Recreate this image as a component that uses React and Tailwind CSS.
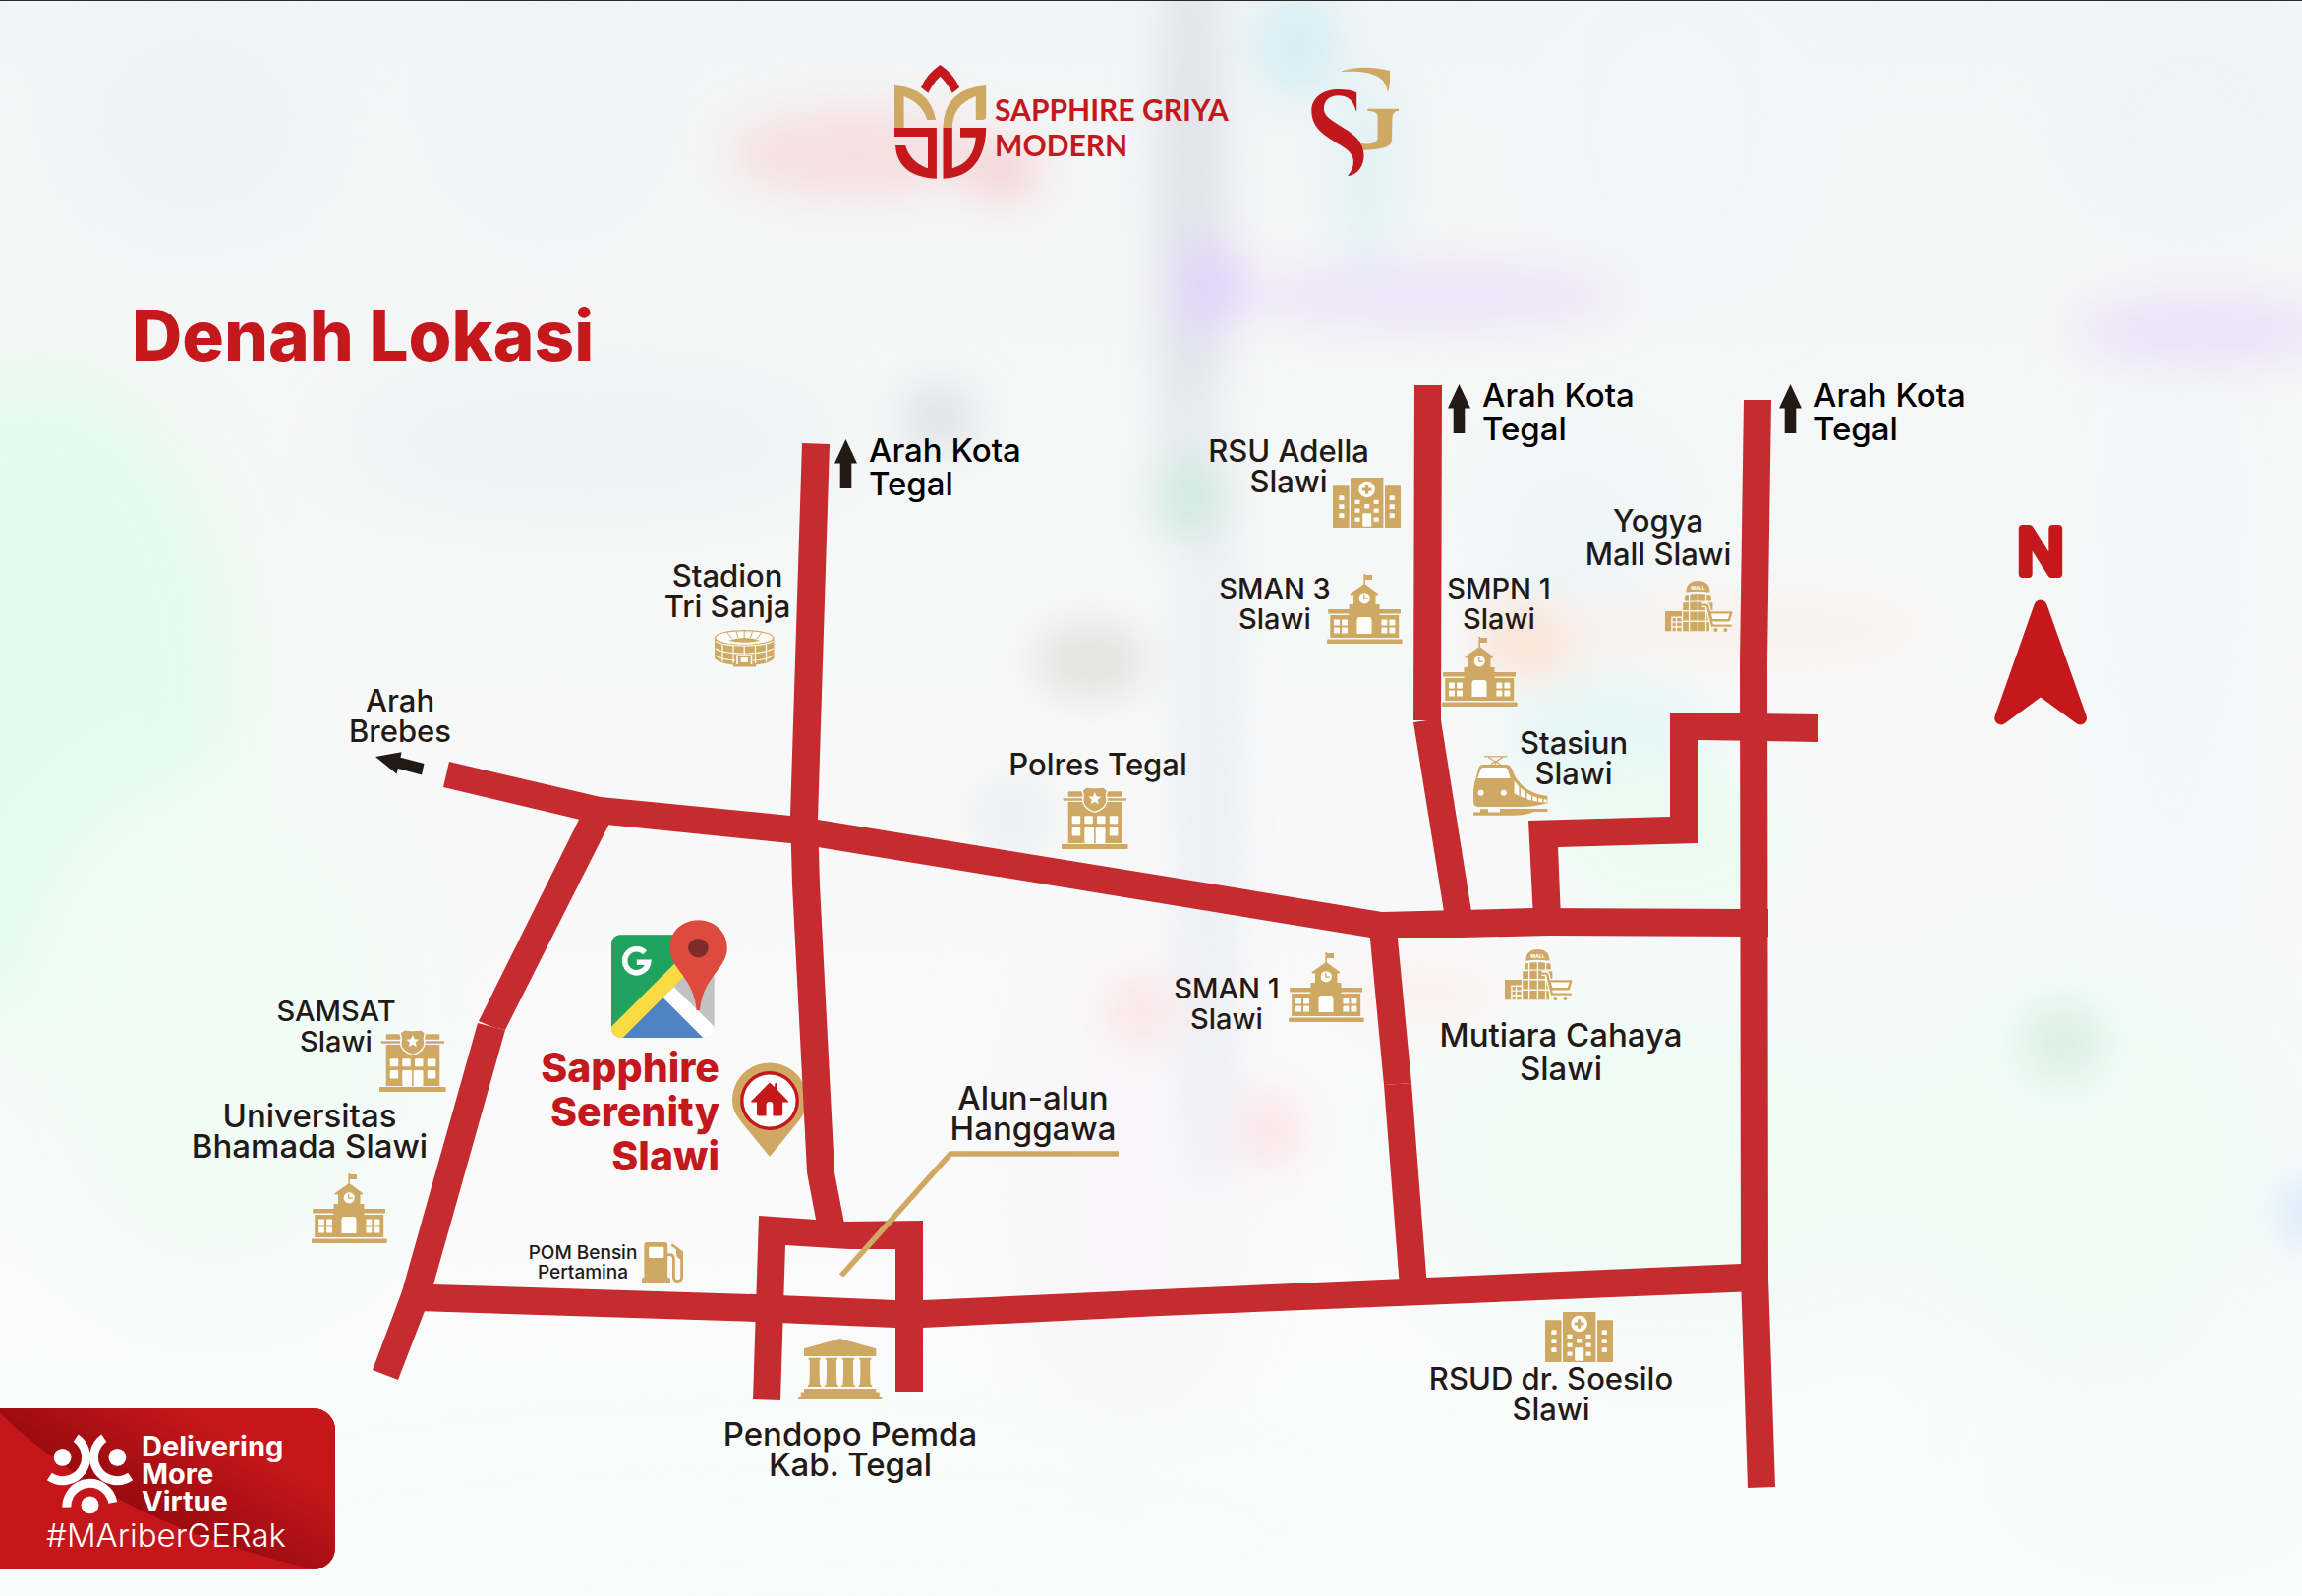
import React from "react";

const MAP = { x: 0, y: 380, w: 2342, h: 1244 };
const at = (x, y) => ({
  left: `${((x - MAP.x) / MAP.w) * 100}%`,
  top: `${((y - MAP.y) / MAP.h) * 100}%`,
});

/* ---------- logos ---------- */

function LotusLogo() {
  return (
    <svg className="h-[118px] w-[94px] shrink-0" viewBox="0 0 94 118" aria-hidden="true">
      <g fill="#c4181c">
        <path d="M46.6 1Q60 10 66.2 24L58.8 29.7Q54 20 46.6 12.7Q39 20 34.4 29.7L27 24Q33 10 46.6 1Z" />
        <path d="M0 65H42.9V116.7C20 116 2 106 1.1 83H11.1Q16 100 34 106.3V74H0Z" />
        <path d="M49.5 65H58.8V106.3Q81 100 82.8 74.7H67V65H93.2C93 96 78 116 49.5 116.7Z" />
      </g>
      <g fill="#cfa964">
        <path d="M0 22Q36 24 42.1 57H33.3Q28 40 9.6 33V65H0Z" />
        <path d="M49.5 65Q50 25 93.2 22V53Q93.2 57 89 57H82.8V33Q59 42 58.8 65Z" />
      </g>
    </svg>
  );
}

function MonogramLogo() {
  return (
    <svg className="h-[118px] w-[94px] shrink-0" viewBox="0 0 94 118" aria-label="SG">
      <g fill="#cfa964">
        <path d="M35 7.3C52 2 70 3 83.9 7C84.5 15 84 22 82.4 27.7H81.5C80 13 65 6 35 8Z" />
        <path d="M61.3 45.7H93.1V47.7Q87 48 86.5 54L86 78Q85.5 83 79 85Q67 88.5 55 87.7V81Q70 83 71.6 76V53Q71 48 61.3 47.7Z" />
      </g>
      <path
        fill="#c1171c"
        d="M50.2 29.3V47.7H49.5C47 37 41 32.3 32 32.3C22 32.3 16.9 38 16.9 46C17 62 57.6 66 57.6 93C57.6 104 51 113 42 114L41.3 113.5C46 108 47 104 46.9 98C46 80 4.3 78 4.3 48C4.3 34 16 26 32 26C40 26 46 27 50.2 29.3Z"
      />
    </svg>
  );
}

/* ---------- place icons ---------- */

const GOLD = "#cfa964";
const PALE = "#fdfdfa";

function Boxes({ list, rx = 0.6 }) {
  return list.map(([x, y, w, h], i) => <rect key={i} x={x} y={y} width={w} height={h} rx={rx} />);
}

function SchoolIcon() {
  return (
    <svg className="h-[71px] w-[77px]" viewBox="0 0 77 71" aria-hidden="true">
      <g fill={GOLD}>
        <path d="M37.4 0H39V1H46V6H39V10.5L52 20V21.5H49.5V31H53.5V36H75V40.5H53.5V42H73.2V65H3.2V42H22.5V40.5H1.2V36H22.5V31H27V21.5H23.7V20L37.4 10.5Z" />
        <rect x="0" y="66.5" width="76.7" height="4.5" rx="1" />
      </g>
      <g fill={PALE}>
        <circle cx="38.2" cy="24.8" r="5.6" />
        <path d="M30.5 61V47Q30.5 44 33.5 44H42.5Q45.5 44 45.5 47V61Z" />
        <Boxes
          list={[
            [7, 46.5, 6, 6], [15, 46.5, 6, 6], [7, 54.5, 6, 6], [15, 54.5, 6, 6],
            [55.4, 46.5, 6, 6], [63.4, 46.5, 6, 6], [55.4, 54.5, 6, 6], [63.4, 54.5, 6, 6],
          ]}
        />
      </g>
      <path d="M37.8 21V25.2H42" fill="none" stroke={GOLD} strokeWidth="1.3" />
    </svg>
  );
}

function HospitalIcon() {
  return (
    <svg className="h-[51px] w-[69px]" viewBox="0 0 69 51" aria-hidden="true">
      <g fill={GOLD}>
        <Boxes list={[[0, 8.3, 16.6, 42.7], [18, 0, 33.4, 51], [53, 8.3, 16, 42.7]]} />
      </g>
      <g fill={PALE}>
        <circle cx="34.6" cy="12" r="8.3" />
        <Boxes
          list={[
            [6.3, 18.3, 5.2, 4.8], [6.3, 27.3, 5.2, 4.8], [6.3, 36.3, 5.2, 4.8],
            [57.7, 18.3, 5.2, 4.8], [57.7, 27.3, 5.2, 4.8], [57.7, 36.3, 5.2, 4.8],
            [22.5, 22.7, 5, 4.2], [22.5, 31.6, 5, 4.2], [22.5, 40.6, 5, 4.2],
            [41.6, 22.7, 5, 4.2], [41.6, 31.6, 5, 4.2], [41.6, 40.6, 5, 4.2],
            [32.2, 27, 5, 4.4], [30.2, 36.3, 9, 13.4],
          ]}
        />
      </g>
      <path d="M34.6 7.2V16.8M29.8 12H39.4" stroke={GOLD} strokeWidth="3.2" />
    </svg>
  );
}

function PoliceIcon() {
  return (
    <svg className="h-[64px] w-[68px]" viewBox="0 0 68 64" aria-hidden="true">
      <g fill={GOLD}>
        <Boxes list={[[6.7, 5.3, 54.6, 5.4], [1.6, 12.3, 64.6, 2.4], [6.7, 16, 54.6, 42], [0, 59, 67.6, 5]]} />
      </g>
      <path
        d="M25 0.8Q33.7 2.4 42.5 0.8L46.6 4.5Q44.6 9 46 14Q46 22.5 33.8 26.4Q21.6 22.5 21.6 14Q23 9 21 4.5Z"
        fill={GOLD}
        stroke={PALE}
        strokeWidth="1.4"
      />
      <path d="M33.8 6L35.6 10.3L40.2 10.7L36.7 13.7L37.8 18.2L33.8 15.8L29.8 18.2L30.9 13.7L27.4 10.7L32 10.3Z" fill={PALE} />
      <g fill={PALE}>
        <Boxes
          list={[
            [10.7, 30.3, 8.5, 8], [23.3, 30.3, 8.5, 8], [36, 30.3, 8.5, 8], [48.8, 30.3, 8.5, 8],
            [10.7, 42, 8.5, 8.6], [48.8, 42, 8.5, 8.6], [23.3, 42, 9.8, 16], [34.7, 42, 9.8, 16],
          ]}
          rx={1}
        />
      </g>
    </svg>
  );
}

function MallIcon() {
  return (
    <svg className="h-[52px] w-[69px]" viewBox="0 0 69 52" aria-hidden="true">
      <g fill={GOLD}>
        <path d="M21.4 11.8Q21.6 0 33.4 0Q45.3 0 45.5 11.8Q33.4 9.8 21.4 11.8Z" />
        <path d="M20.4 14.6Q33.4 11.4 46.4 14.6L47 20.6H19.8Z" />
        <path d="M18.2 22.6Q33.4 20.4 48.4 22.6V30H18.2Z" />
        <path d="M18.2 31.6H46V40.4H18.2ZM18.2 42H45V51.3H18.2Z" />
        <path d="M0 31H17V36.6H6.2V51.3H0Z" />
        <Boxes list={[[7.6, 38, 3.2, 3.4], [12.2, 38, 4.4, 3.4], [7.6, 42.8, 3.2, 3.4], [12.2, 42.8, 4.4, 3.4], [7.6, 47.8, 3.2, 3.5], [12.2, 47.8, 4.4, 3.5]]} rx={0} />
      </g>
      <path d="M24.6 12.5V51.5M33.4 12V51.5M41.6 12.5V51.5" stroke={PALE} strokeWidth="1.3" />
      <path d="M37.4 24.6H42Q43 24.6 43.3 26L47.6 44.8H67" fill="none" stroke={PALE} strokeWidth="5" />
      <g fill="none" stroke={GOLD}>
        <path d="M37.4 24.6H42Q43 24.6 43.3 26L47.8 45.6H66.8" strokeWidth="2.4" strokeLinecap="round" />
        <path d="M45.4 32.4H67.2L64.8 40.2H47.4Z" strokeWidth="2.4" fill={PALE} strokeLinejoin="round" />
      </g>
      <circle cx="51.4" cy="50" r="2" fill={GOLD} />
      <circle cx="61.4" cy="50" r="2" fill={GOLD} />
      <text x="33.4" y="8.6" textAnchor="middle" fontFamily="Inter, sans-serif" fontWeight="800" fontSize="5" fill={PALE}>
        MALL
      </text>
    </svg>
  );
}

function TrainIcon() {
  return (
    <svg className="h-[61px] w-[76px]" viewBox="0 0 76 61" aria-hidden="true">
      <g fill="none" stroke={GOLD} strokeWidth="1.3">
        <path d="M11 0.8H34.4M15 1L22.5 6.5L30.5 1M22.5 6.5V9M17.5 9L22.5 5.5L27.5 9" />
      </g>
      <path
        fill={GOLD}
        d="M9 9H34Q37 9 38.2 11.5L42.5 21Q52 38 75.5 41V48.3Q62 52 50 52H6Q0 52 0 46V36Q0 30 5.6 12Q6.6 9 9 9Z"
      />
      <g fill={PALE}>
        <path d="M10 12H32Q34 12 34.8 13.6L37.6 23H4.3L7.6 13.6Q8.2 12 10 12Z" />
        <circle cx="7.6" cy="37.8" r="3" />
        <circle cx="30.8" cy="37.8" r="3" />
        <path d="M41.6 25.4L46.4 31.4V41L41.6 38.2ZM47.8 32.6L53 36.8V43.6L47.8 41.4ZM54.4 37.8L59 40.4V45.4L54.4 44ZM60.4 41L64.8 42.6V46.6L60.4 45.8ZM66.2 43L70.2 44V47.4L66.2 46.8ZM71.6 44.2L74.6 44.6V47.6L71.6 47.5Z" />
      </g>
      <path fill={GOLD} d="M75.5 54V57H62Q52 60.8 41 60.8H0V57.4H7V54.2H15V57.4H27V54Z" />
    </svg>
  );
}

function StadiumIcon() {
  return (
    <svg className="h-[38px] w-[61px]" viewBox="0 0 61 38" aria-hidden="true">
      <path fill={GOLD} d="M0 8H60.5V29Q56 34 42 35.5V37.6H19V35.5Q5 34 0 29Z" />
      <ellipse cx="30.2" cy="8" rx="29.6" ry="7.4" fill={PALE} stroke={GOLD} strokeWidth="1.2" />
      <path
        d="M13 3L18 9.5M22 1.5L24 8M30.2 1V8M38.5 1.5L36.5 8M47.5 3L42.5 9.5"
        stroke={GOLD}
        strokeWidth="1"
      />
      <path d="M14 11Q30 5 46.4 11Q30 14.4 14 11Z" fill={GOLD} />
      <g fill="none" stroke={PALE} strokeWidth="1.2">
        <path d="M1 11.5Q8 16 30.2 16Q52 16 59.5 11.5M1 19Q9 24 30.2 24Q51 24 59.5 19M1 26Q8 30.5 21 31M39 31Q53 30.5 59.5 26" />
        <path d="M8 15V32.5M19 16V34M30.2 16V25M41.5 16V34M52.5 15V32.5" />
        <path d="M23 35V26H37.5V35" strokeWidth="1.6" />
      </g>
      <rect x="26.6" y="28" width="7.4" height="5" fill={PALE} />
    </svg>
  );
}

function HallIcon() {
  return (
    <svg className="h-[62px] w-[86px]" viewBox="0 0 86 62" aria-hidden="true">
      <g fill={GOLD}>
        <path d="M42.7 0L79.3 10.3V18H6V10.3Z" />
        {[10.7, 28, 45, 62.3].map((x) => (
          <path
            key={x}
            d={`M${x} 19.7H${x + 12}V21.4L${x + 11} 22Q${x + 10.6} 34 ${x + 11.4} 46.4L${x + 12.8} 47.4V49H${x - 0.8}V47.4L${x + 0.6} 46.4Q${x + 1.4} 34 ${x + 1} 22L${x} 21.4Z`}
          />
        ))}
        <path d="M6 51H79.3V54.6H82.7V59H85.4V62H0V59H2.7V54.6H6Z" />
      </g>
    </svg>
  );
}

function FuelIcon() {
  return (
    <svg className="h-[41px] w-[42px]" viewBox="0 0 42 41" aria-hidden="true">
      <g fill={GOLD}>
        <path d="M5 0H23.6Q26.2 0 26.2 2.6V36H27.5Q29 36 29 37.5V41H0V37.5Q0 36 1.4 36H2.4V2.6Q2.4 0 5 0Z" />
        <path d="M31 1.2L42 9.4V17H38.4Q35 15 35 11V7.6L29.8 3.8Z" />
      </g>
      <rect x="7.2" y="4.7" width="15.2" height="11.2" rx="1.2" fill={PALE} />
      <path
        d="M26 12.6H28.6Q32.4 12.6 32.4 17V35Q32.4 39.6 36.4 39.6Q40.6 39.6 40.6 35V12"
        fill="none"
        stroke={GOLD}
        strokeWidth="2.8"
      />
    </svg>
  );
}

function GoogleMapsIcon() {
  return (
    <svg className="h-[120px] w-[118px]" viewBox="0 0 118 120" role="img" aria-label="Google Maps">
      <defs>
        <clipPath id="tile">
          <rect x="0" y="15.3" width="104.7" height="104.7" rx="9" />
        </clipPath>
      </defs>
      <g clipPath="url(#tile)">
        <rect x="0" y="15" width="105" height="105" fill="#c2c2c2" />
        <path d="M0 15H94L0 109Z" fill="#21a360" />
        <path d="M52.3 79L63.7 68.3L105 109V120H93Z" fill="#fff" />
        <path d="M52.3 79L93.3 120H11.3Z" fill="#5083c3" />
        <path d="M0 108.7L75 34L86 45.5L11.5 120H0Z" fill="#fadb43" />
      </g>
      <path d="M34.2 33.3A12 12 0 1 0 37.6 43.2H25.8" fill="none" stroke="#fff" strokeWidth="5.6" />
      <path
        d="M88.3 0.3C105 0.3 117.8 12.4 117.8 28.6C117.8 50 93 58 90 92H86.6C84 58 59.2 50 59.2 28.6C59.2 12.4 72 0.3 88.3 0.3Z"
        fill="#dc4b3e"
      />
      <ellipse cx="88.4" cy="28.6" rx="10.3" ry="9.6" fill="#7e2c27" />
    </svg>
  );
}

function HomePin() {
  return (
    <svg className="h-[96px] w-[76px]" viewBox="0 0 76 96" aria-hidden="true">
      <path d="M38 0.5C59 0.5 76 17 76 38C76 48 71.5 54.5 67 60.5L38 96L9 60.5C4.5 54.5 0 48 0 38C0 17 17 0.5 38 0.5Z" fill={GOLD} />
      <circle cx="38" cy="39" r="28.2" fill="#fff" stroke="#c4181c" strokeWidth="3.4" />
      <path
        d="M38 20.4L43.2 25.2V21.6L46 20.6V28L57 39.4V40.6H51.2V52.6Q51.2 54.4 49.4 54.4H41.4V43.4Q41.4 40 38 40Q34.6 40 34.6 43.4V54.4H26.8Q25 54.4 25 52.6V40.6H19.2V39.4Z"
        fill="#c4181c"
      />
    </svg>
  );
}

function Compass() {
  return (
    <svg className="h-[232px] w-[96px]" viewBox="0 -24 96 232" aria-label="North">
      <g fill="#c4181c" stroke="#c4181c" strokeLinejoin="round">
        <text x="48" y="52" textAnchor="middle" fontFamily="Inter, sans-serif" fontWeight="400" fontSize="63" strokeWidth="8">
          N
        </text>
        <path d="M48 85.3L88.3 198.7L48 169L8 198.7Z" strokeWidth="13.4" />
      </g>
    </svg>
  );
}

function UpArrow() {
  return (
    <svg className="h-[50px] w-[23px]" viewBox="0 0 23 50" fill="#231916" aria-hidden="true">
      <path d="M11.5 0L23 24.5H17.3V50H5.7V24.5H0Z" />
    </svg>
  );
}

function LeftArrow() {
  return (
    <svg className="h-[24px] w-[50px]" viewBox="0 0 50 24" fill="#231916" aria-hidden="true">
      <path d="M0 5L26.5 0.3L25.5 5.8L49.5 12L47 23.4L23 17L21.5 22.4Z" />
    </svg>
  );
}

const ICONS = {
  school: SchoolIcon,
  hospital: HospitalIcon,
  police: PoliceIcon,
  mall: MallIcon,
  train: TrainIcon,
  stadium: StadiumIcon,
  hall: HallIcon,
  fuel: FuelIcon,
  maps: GoogleMapsIcon,
  home: HomePin,
  compass: Compass,
  up: UpArrow,
  left: LeftArrow,
};

const MARKERS = [
  ["up", 849, 447], ["up", 1473, 391], ["up", 1810, 391], ["left", 382, 765],
  ["stadium", 727, 641], ["police", 1080, 800], ["hospital", 1356, 486], ["school", 1350, 584],
  ["school", 1467, 648], ["mall", 1694, 591], ["train", 1499, 769], ["school", 1311, 969],
  ["mall", 1531, 966], ["hospital", 1572, 1335], ["police", 386, 1047], ["school", 317, 1194],
  ["fuel", 653, 1264], ["hall", 812, 1362], ["maps", 622, 936], ["home", 745, 1081],
  ["compass", 2028, 508],
];

/* ---------- labels: x is the anchor, y the top of the first line ---------- */

const narrow = "text-center -translate-x-1/2 text-[29px] leading-[31px] text-[#231916]";
const tight = "text-center -translate-x-1/2 text-[31px] leading-[31px] text-[#231916]";
const loose = "text-center -translate-x-1/2 text-[31px] leading-[34px] text-[#231916]";
const wide = "text-center -translate-x-1/2 text-[33px] leading-[31px] text-[#231916]";
const wideLoose = "text-center -translate-x-1/2 text-[33px] leading-[34px] text-[#231916]";
const exit = "text-left text-[33px] leading-[34px] text-black";
const small = "text-center -translate-x-1/2 text-[19px] leading-5 text-[#231916]";

const LABELS = [
  [["Arah Kota", "Tegal"], 884, 441, exit],
  [["Arah Kota", "Tegal"], 1508, 385, exit],
  [["Arah Kota", "Tegal"], 1845, 385, exit],
  [["Stadion", "Tri Sanja"], 740, 570, tight],
  [["Arah", "Brebes"], 407, 697, tight],
  [["Polres Tegal"], 1117, 762, tight],
  [["RSU Adella", "Slawi"], 1311, 443, tight],
  [["SMAN 3", "Slawi"], 1297, 583, narrow],
  [["SMPN 1", "Slawi"], 1525, 583, narrow],
  [["Yogya", "Mall Slawi"], 1687, 513, loose],
  [["Stasiun", "Slawi"], 1601, 740, tight],
  [["SMAN 1", "Slawi"], 1248, 990, narrow],
  [["Mutiara Cahaya", "Slawi"], 1588, 1036, wideLoose],
  [["RSUD dr. Soesilo", "Slawi"], 1578, 1387, tight],
  [["Pendopo Pemda", "Kab. Tegal"], 865, 1444, wide],
  [["Alun-alun", "Hanggawa"], 1051, 1102, wide],
  [["SAMSAT", "Slawi"], 342, 1013, narrow],
  [["Universitas", "Bhamada Slawi"], 315, 1120, wide],
  [["POM Bensin", "Pertamina"], 593, 1265, small],
];

/* ---------- road network ---------- */

const ROADS = [
  "457,775 611,811 804,830 832,834 1237,900 1406,928 1560,924 1799,925 1799,953 1576,952 1486,954 1394,954 832,862 804,858 607,838 451,801",
  "816,451 844,452 832,834 834,900 849,1193 859,1245 855,1262 834,1262 821,1193 806,900 804,830",
  "772,1237 830,1241 858,1243 939,1242 939,1416 911,1416 911,1271 864,1271 847,1270 799,1267 794,1425 766,1424",
  "425,1306 441,1307 768,1317 911,1323 939,1323 1180,1312 1771,1286 1785,1286 1785,1314 1180,1339 939,1351 911,1351 768,1345 425,1334",
  "593,826 626,826 514,1048 501,1045 487,1039",
  "486,1041 501,1045 514,1048 441,1307 432,1334 405,1404 379,1394 409,1314",
  "1439,392 1467,392 1466,733 1438,733",
  "1438,735 1452,733 1466,733 1499,940 1471,940",
  "1699,725 1850,727 1850,755 1727,753 1727,858 1585,862 1588,935 1560,935 1555,835 1699,831",
  "1774,407 1802,407 1798,673 1799,1300 1806,1513 1778,1514 1771,1300 1770,673",
  "1393,945 1421,945 1436,1102 1408,1104",
  "1408,1104 1436,1102 1452,1310 1424,1310",
];

function Roads() {
  return (
    <svg className="absolute inset-0 h-full w-full" viewBox="0 380 2342 1244" preserveAspectRatio="none" aria-hidden="true">
      <g fill="#c52b2f">
        {ROADS.map((points) => (
          <polygon key={points} points={points} />
        ))}
      </g>
      <path d="M1138 1174H967L856 1298" fill="none" stroke={GOLD} strokeWidth="5.6" />
    </svg>
  );
}

/* ---------- soft backdrop: [cx, cy, rx, ry, colour] ---------- */

const WASHES = [
  [40, 720, 210, 350, "#e3fbec"],
  [220, 1050, 200, 260, "#f1fcf6"],
  [1700, 130, 120, 160, "#f2f5f9"],
  [2230, 120, 120, 110, "#f0f3f7"],
  [200, 130, 120, 110, "#eff2f6"],
  [560, 120, 100, 120, "#f1f3f6"],
  [600, 450, 260, 70, "#eff1f3"],
  [1600, 560, 90, 110, "#edf5f8"],
  [2210, 650, 60, 300, "#f0f6f9"],
  [1700, 1180, 280, 180, "#f0fbf6"],
  [2120, 1180, 220, 220, "#f0fbf6"],
  [800, 1560, 620, 90, "#f6fdfa"],
  [2200, 1500, 200, 120, "#f5fcf9"],
  [1150, 1200, 120, 260, "#f8f6f8"],
];

const SPOTS = [
  [1212, 220, 34, 330, "#e0e3ea"],
  [1230, 800, 32, 420, "#eceef3"],
  [870, 155, 130, 44, "#f5dfe1"],
  [1020, 172, 36, 28, "#f6ced3"],
  [1320, 45, 46, 56, "#d5eff4"],
  [1390, 170, 38, 100, "#e3f2f5"],
  [1232, 290, 36, 44, "#e2d2fb"],
  [1460, 300, 190, 34, "#ece4f8"],
  [2240, 335, 130, 36, "#ebe2f8"],
  [955, 425, 38, 34, "#dde2e7"],
  [1210, 505, 36, 46, "#cfe9df"],
  [1110, 672, 58, 38, "#e2e2e0"],
  [1030, 830, 40, 40, "#ebedef"],
  [1560, 650, 56, 38, "#fbe2d3"],
  [1760, 640, 190, 30, "#faf1ec"],
  [1640, 750, 110, 60, "#e6f7f5"],
  [1700, 850, 120, 80, "#ebfbf3"],
  [2098, 1060, 40, 40, "#d9eee5"],
  [1160, 1028, 34, 34, "#fbe4e6"],
  [1292, 1150, 34, 40, "#fae4e8"],
  [1450, 1010, 80, 34, "#fbf0f1"],
  [2350, 1235, 30, 34, "#d6e6fb"],
];

function Backdrop() {
  return (
    <svg
      className="absolute inset-0 -z-10 h-full w-full"
      viewBox="0 0 2342 1624"
      preserveAspectRatio="none"
      aria-hidden="true"
    >
      <defs>
        <linearGradient id="sky" x1="0" y1="0" x2="0" y2="1">
          <stop offset="0" stopColor="#f3f4f5" />
          <stop offset="0.35" stopColor="#f6f7f7" />
          <stop offset="0.75" stopColor="#fafafb" />
          <stop offset="1" stopColor="#fafcfb" />
        </linearGradient>
        <filter id="softer" x="-20%" y="-20%" width="140%" height="140%">
          <feGaussianBlur stdDeviation="48" />
        </filter>
        <filter id="soft" x="-10%" y="-10%" width="120%" height="120%">
          <feGaussianBlur stdDeviation="22" />
        </filter>
      </defs>
      <rect width="2342" height="1624" fill="url(#sky)" />
      <g filter="url(#softer)">
        {WASHES.map(([cx, cy, rx, ry, fill]) => (
          <ellipse key={`${cx}-${cy}`} cx={cx} cy={cy} rx={rx} ry={ry} fill={fill} />
        ))}
      </g>
      <g filter="url(#soft)">
        {SPOTS.map(([cx, cy, rx, ry, fill]) => (
          <ellipse key={`${cx}-${cy}`} cx={cx} cy={cy} rx={rx} ry={ry} fill={fill} />
        ))}
      </g>
    </svg>
  );
}

/* ---------- campaign badge ---------- */

function Badge() {
  return (
    <aside className="absolute bottom-[27px] left-0 isolate flex h-[164px] w-[341px] flex-col overflow-hidden rounded-r-[22px] bg-[#c5171b] pt-[25px] pl-[47px] text-white">
      <svg className="absolute inset-0 -z-10 h-full w-full" viewBox="0 0 341 164" preserveAspectRatio="none" aria-hidden="true">
        <defs>
          <linearGradient id="shade" gradientUnits="userSpaceOnUse" x1="120" y1="98" x2="178" y2="-4">
            <stop offset="0" stopColor="#960a0e" />
            <stop offset="1" stopColor="#c5171b" />
          </linearGradient>
        </defs>
        <path d="M0 0V5C60 62 150 125 320 164H341V0Z" fill="url(#shade)" />
      </svg>
      <div className="flex items-center gap-2">
        <svg className="h-[83px] w-[89px]" viewBox="140 178 268 248" aria-hidden="true">
          <g fill="#fff">
            <circle cx="190" cy="249" r="27" />
            <circle cx="358" cy="249" r="27" />
            <circle cx="274" cy="395" r="27" />
          </g>
          <g fill="none" stroke="#fff" strokeWidth="27">
            <path d="M231 190A71 71 0 0 1 150 308" />
            <path d="M317 190A71 71 0 0 0 398 308" />
            <path d="M203 402A71 71 0 0 1 344 388" />
          </g>
        </svg>
        <p className="text-[29px] leading-7 font-bold">
          Delivering
          <br />
          More
          <br />
          Virtue
        </p>
      </div>
      <p className="mt-0.5 text-[33px] leading-9 font-light">#MAriberGERak</p>
    </aside>
  );
}

export default function App() {
  return (
    <main className="relative isolate flex min-h-screen flex-col overflow-hidden border-t border-[#2b2b2b] bg-[#f7f8f8] font-['Inter',sans-serif]">
      <Backdrop />

      <header className="flex items-start justify-center pt-16 pr-2">
        <LotusLogo />
        <p className="mt-7 ml-2 font-['Lato',sans-serif] text-[30px] leading-9 font-bold text-[#c4181c]">
          SAPPHIRE GRIYA
          <br />
          MODERN
        </p>
        <div className="ml-20">
          <MonogramLogo />
        </div>
      </header>

      <h1 className="mt-[122px] pl-[134px] text-[71px] leading-[72px] font-extrabold text-[#c4181c]">Denah Lokasi</h1>

      <section className="relative mt-[3px] aspect-[2342/1244] w-full" aria-label="Denah Lokasi">
        {MARKERS.map(([kind, x, y]) => {
          const Icon = ICONS[kind];
          return (
            <div key={`${kind}-${x}`} className="absolute" style={at(x, y)}>
              <Icon />
            </div>
          );
        })}
        <Roads />
        {LABELS.map(([lines, x, y, look]) => (
          <p key={`${lines[0]}-${x}`} className={`absolute font-medium whitespace-nowrap ${look}`} style={at(x, y)}>
            {lines.map((line) => (
              <span key={line} className="block">
                {line}
              </span>
            ))}
          </p>
        ))}
        <p
          className="absolute -translate-x-full text-right text-[41px] leading-[45px] font-extrabold text-[#c4181c]"
          style={at(732, 1064)}
        >
          Sapphire
          <br />
          Serenity
          <br />
          Slawi
        </p>
        <Badge />
      </section>
    </main>
  );
}
